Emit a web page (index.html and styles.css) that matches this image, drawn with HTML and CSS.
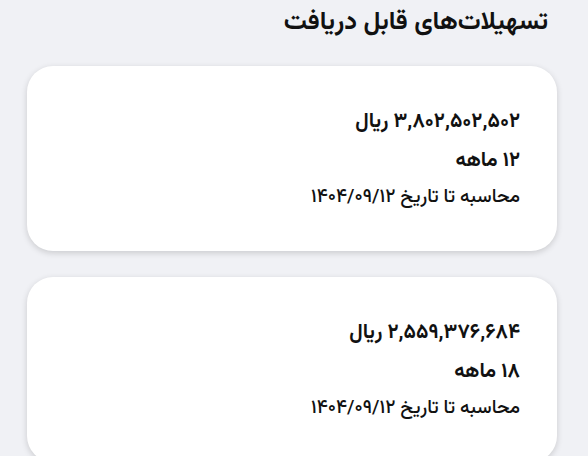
FILE: index.html
```
<!DOCTYPE html>
<html lang="fa" dir="rtl">
<head>
<meta charset="utf-8">
<title>تسهیلات</title>
<link rel="stylesheet" href="styles.css">
</head>
<body>
<main class="page">
  <h1 class="title">تسهیلات‌های قابل دریافت</h1>
  <section class="card">
    <div class="amount">۳,۸۰۲,۵۰۲,۵۰۲ ریال</div>
    <div class="term">۱۲ ماهه</div>
    <div class="date">محاسبه تا تاریخ ۱۴۰۴/۰۹/۱۲</div>
  </section>
  <section class="card">
    <div class="amount">۲,۵۵۹,۳۷۶,۶۸۴ ریال</div>
    <div class="term">۱۸ ماهه</div>
    <div class="date">محاسبه تا تاریخ ۱۴۰۴/۰۹/۱۲</div>
  </section>
</main>
</body>
</html>
```
FILE: styles.css
```
html, body {
  margin: 0;
  padding: 0;
  background: #f0f1f5;
}
body {
  font-family: "Vazirmatn", "Noto Sans Arabic", "DejaVu Sans", sans-serif;
  color: #111;
  height: 456px;
  overflow: hidden;
}
.page {
  display: flex;
  flex-direction: column;
  padding: 6px 31px 0 27px;
  gap: 26px;
}
.title {
  margin: 0 9px 0 0;
  font-size: 25.6px;
  font-weight: bold;
  line-height: 34px;
}
.card {
  background: #fff;
  border-radius: 26px;
  box-shadow: 0 2px 6px rgba(0, 0, 0, 0.16);
  padding: 44px 37px 41px 37px;
  display: flex;
  flex-direction: column;
}
.amount, .term {
  font-size: 20.4px;
  font-weight: bold;
  line-height: 24px;
}
.term {
  margin-top: 15px;
}
.date {
  margin-top: 13px;
  font-size: 19px;
  font-weight: 500;
  line-height: 24px;
}
```
